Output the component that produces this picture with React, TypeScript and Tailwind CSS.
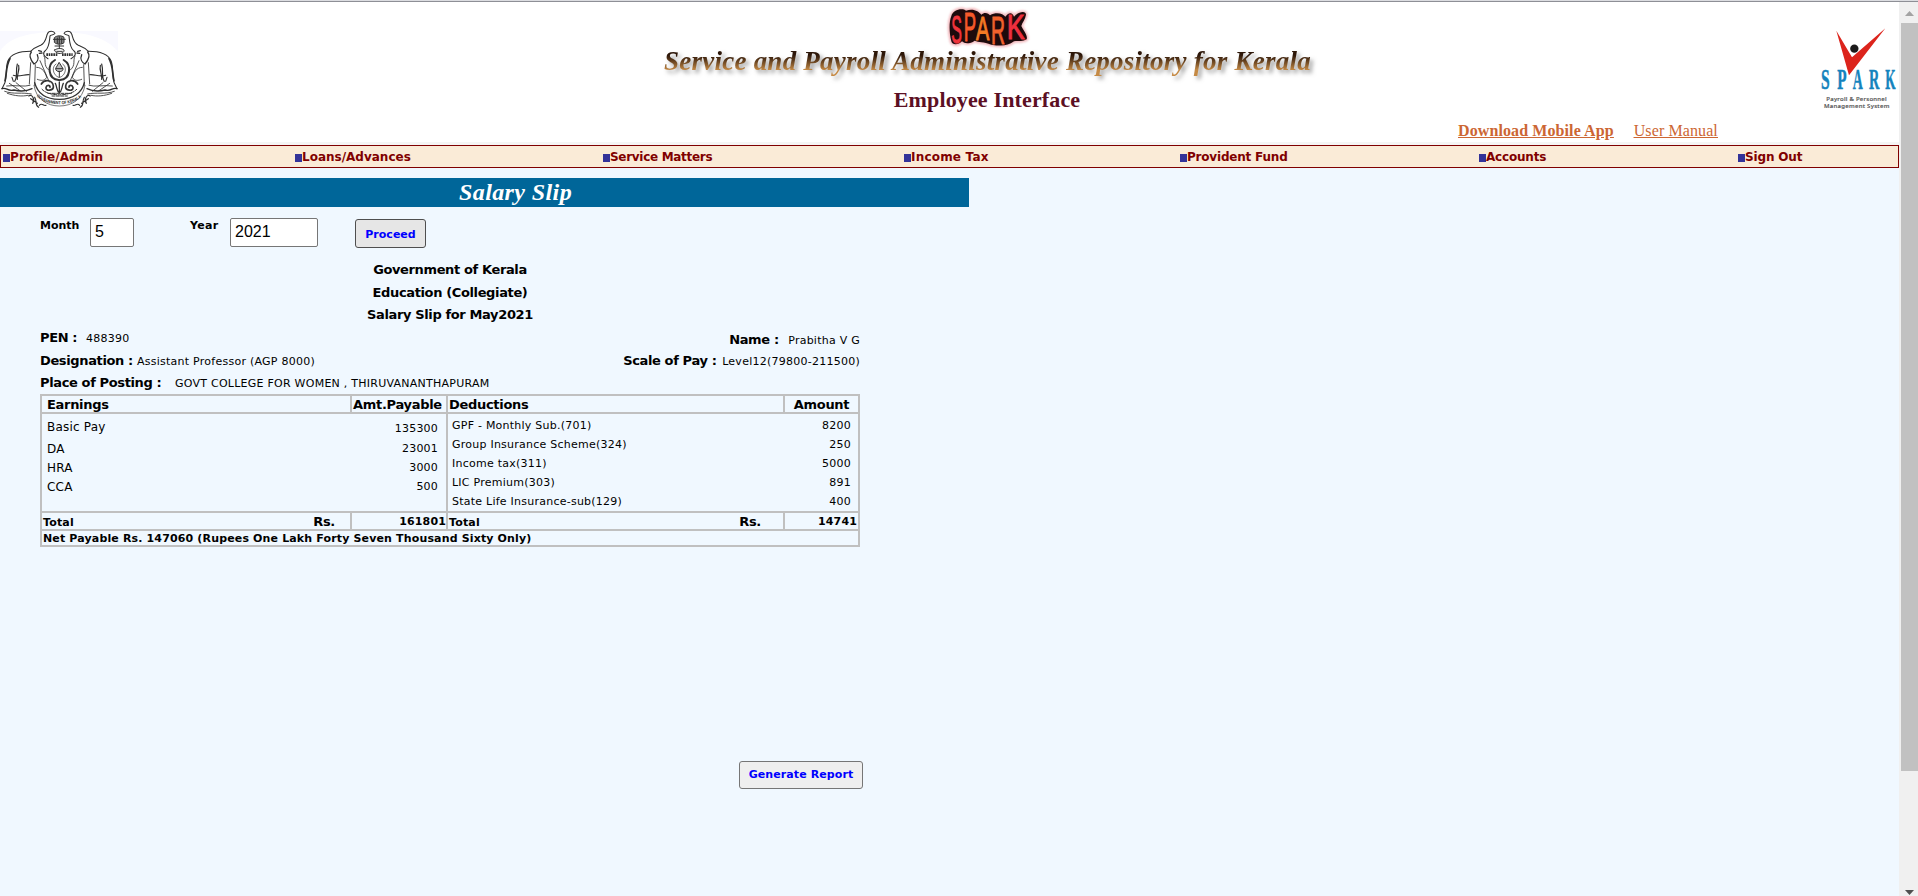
import React from "react";

const SANS = "font-['DejaVu_Sans',Verdana,sans-serif]";
const SERIF = "font-['Liberation_Serif','Times_New_Roman',serif]";

function Elephant() {
  return (
    <g fill="none" stroke="#2f2f2f" strokeWidth="3.2" strokeLinecap="round" strokeLinejoin="round">
      <path d="M92 70 C62 70 34 76 24 98 C15 122 22 146 14 166 L6 182" />
      <path d="M30 92 C18 112 20 140 15 158" strokeWidth="5" />
      <path d="M52 108 C46 130 54 146 44 160 M56 112 C60 126 50 140 52 154" strokeWidth="3.5" />
      <path d="M92 70 C104 58 112 56 122 52 C138 44 138 28 142 18 C146 6 162 8 165 16 C160 24 152 18 150 24 C148 42 148 58 136 68 C126 76 132 86 144 92" />
      <path d="M94 72 C84 84 92 96 102 108 C110 104 118 94 112 80" strokeWidth="4" />
      <path d="M116 68 L124 70 M118 76 L126 75" strokeWidth="4" />
      <path d="M132 84 C140 98 128 110 146 126" strokeWidth="2.5" />
      <path d="M92 104 L88 168 M106 110 L104 172 M110 118 C128 118 136 134 140 148 C134 160 122 158 112 154 M120 98 L148 162" strokeWidth="2.5" />
      <path d="M40 142 C58 148 74 138 88 140 M36 148 L40 160" />
      <path d="M6 182 C20 176 22 192 42 186 C58 190 76 192 96 182" strokeWidth="4" />
      <path d="M14 190 C40 200 68 192 94 198 M22 196 C44 204 66 206 84 202 M20 174 C46 170 72 178 90 172 M28 166 L60 188 M48 164 L80 190" strokeWidth="2.5" />
      <path d="M86 204 C96 196 106 214 98 226 M104 208 C112 220 104 232 116 238 M118 232 C126 222 130 236 138 232 M92 212 L112 226" strokeWidth="3.5" />
    </g>
  );
}

function Emblem() {
  return (
    <svg className="mt-[26px] block h-[84px] w-[120px] shrink-0" viewBox="0 0 360 252">
      <path d="M0 9 H354 V70 C320 30 260 12 178 12 C96 12 30 24 0 70 Z" fill="#f9f9ff" />
      <Elephant />
      <g transform="translate(357 0) scale(-1 1)">
        <Elephant />
      </g>
      <g fill="none" stroke="#333" strokeWidth="3" strokeLinecap="round">
        <path d="M164 28 C170 22 186 22 192 28 V44 C186 50 170 50 164 44 Z" fill="#8b8b8b" />
        <path d="M172 30 V46 M178 26 V48 M185 30 V46 M160 34 H196" />
        <path d="M165 54 H191 M178 51 V62 M164 66 C172 60 186 60 192 66 C194 80 164 80 164 66 Z M170 70 H187" />
        <path d="M139 80 H172 M186 80 H218" strokeWidth="8" strokeDasharray="5 2" strokeLinecap="butt" />
        <path d="M165 96 C140 110 144 154 176 156 M191 96 C216 110 212 154 180 156" strokeWidth="6" />
        <path d="M168 108 C154 116 158 142 176 148 M188 108 C202 116 198 142 180 148" strokeWidth="2" />
        <path d="M178 104 L189 122 C191 134 165 134 167 122 Z" fill="#bcbcbc" />
        <path d="M178 130 V148 M168 122 H188" />
        <path d="M124 168 C134 152 158 156 160 174 C162 188 136 192 138 178 C140 170 150 170 150 178" strokeWidth="5" />
        <path d="M233 168 C223 152 199 156 197 174 C195 188 221 192 219 178 C217 170 207 170 207 178" strokeWidth="5" />
        <path d="M178 162 V190 M166 166 C172 180 170 190 178 194 C186 190 184 180 190 166" strokeWidth="4" />
        <path d="M104 164 C112 194 136 214 178 214 C220 214 246 194 253 164" strokeWidth="4" />
        <path d="M126 184 C146 206 210 206 230 184 M144 196 L214 196 M156 204 H202" strokeWidth="3" strokeDasharray="9 4" />
        <path d="M102 172 C108 214 142 234 178 234 C216 234 248 214 255 172" strokeWidth="2" />
      </g>
      <path id="motto" d="M110 204 C136 237 220 237 246 204" fill="none" />
      <text className="font-['Liberation_Sans',Arial,sans-serif] font-bold" fontSize="13" fill="#222">
        <textPath href="#motto" textLength="146" lengthAdjust="spacingAndGlyphs">GOVERNMENT OF KERALA</textPath>
      </text>
    </svg>
  );
}

function FieryWordmark() {
  const letters = [
    { c: "S", x: 94, y: 128, s: 118, w: 32, f: "#f0343c" },
    { c: "P", x: 131, y: 124, s: 120, w: 37, f: "#f4592a" },
    { c: "A", x: 168, y: 120, s: 100, w: 40, f: "#f47a24" },
    { c: "R", x: 213, y: 132, s: 118, w: 42, f: "#f2612c" },
    { c: "K", x: 260, y: 118, s: 106, w: 54, f: "#ee2f3e" },
  ];
  const glow =
    "M94 48 C98 30 126 22 138 32 C160 24 176 34 184 44 C194 34 206 40 210 46 C230 34 250 42 256 50 C268 34 278 38 282 50 C296 34 318 32 318 44 C316 58 306 68 304 78 C310 92 324 106 320 118 C306 126 290 122 282 124 C262 140 240 138 214 134 C190 124 176 128 164 122 C150 132 134 132 126 124 C116 136 96 136 94 124 C88 100 86 68 94 48 Z";
  return (
    <svg className="ml-[4px] block h-[46px] w-[86px] overflow-visible" viewBox="78 6 258 138">
      <path d={glow} fill="#e98a92" stroke="#e98a92" strokeWidth="10" opacity="0.6" className="blur-[3px]" />
      <path d={glow} fill="#1d0a0c" />
      <g className="font-['Liberation_Sans_Narrow','Liberation_Sans',Arial,sans-serif]">
        {letters.map((l) => (
          <text key={l.c} x={l.x} y={l.y} fontSize={l.s} textLength={l.w} lengthAdjust="spacingAndGlyphs" fill={l.f} stroke={l.f} strokeWidth="3">{l.c}</text>
        ))}
      </g>
    </svg>
  );
}

function SparkLogo() {
  return (
    <svg className="mt-[18px] block h-[96px] w-[89px] shrink-0" viewBox="0 0 267 288">
      <g className="font-['Liberation_Serif',serif] font-bold" fill="#1583bd" stroke="#1583bd" strokeWidth="1.5" fontSize="90">
        <text x="33" y="207" textLength="26" lengthAdjust="spacingAndGlyphs">S</text>
        <text x="82" y="207" textLength="28" lengthAdjust="spacingAndGlyphs">P</text>
        <text x="128" y="207" textLength="30" lengthAdjust="spacingAndGlyphs">A</text>
        <text x="177" y="207" textLength="31" lengthAdjust="spacingAndGlyphs">R</text>
        <text x="226" y="207" textLength="31" lengthAdjust="spacingAndGlyphs">K</text>
      </g>
      <path d="M79 32 L126 112 L226 25 L117 166 Z" fill="#dc241c" />
      <circle cx="133" cy="86" r="12.5" fill="#1c1a1a" />
      <g className="font-['Noto_Sans',sans-serif] font-medium" fill="#555" stroke="#555" strokeWidth="0.5" fontSize="18">
        <text x="49" y="243" textLength="181">Payroll  &amp; Personnel</text>
        <text x="42" y="264" textLength="196">Management System</text>
      </g>
    </svg>
  );
}

const menu = [
  { label: "Profile/Admin", box: "w-[292px] tracking-[0.1px]" },
  { label: "Loans/Advances", box: "w-[308px]" },
  { label: "Service Matters", box: "w-[301px] tracking-[-0.3px]" },
  { label: "Income Tax", box: "w-[276px] tracking-[0.2px]" },
  { label: "Provident Fund", box: "w-[299px] tracking-[-0.2px]" },
  { label: "Accounts", box: "w-[259px] tracking-[-0.2px]" },
  { label: "Sign Out", box: "w-[150px] tracking-[-0.15px]" },
];

const earnings = [
  ["Basic Pay", "135300", "h-[22px]", "pt-[2px]"],
  ["DA", "23001", "h-[19px]", ""],
  ["HRA", "3000", "h-[19px]", ""],
  ["CCA", "500", "h-[19px]", ""],
];

const deductions = [
  ["GPF - Monthly Sub.(701)", "8200"],
  ["Group Insurance Scheme(324)", "250"],
  ["Income tax(311)", "5000"],
  ["LIC Premium(303)", "891"],
  ["State Life Insurance-sub(129)", "400"],
];

function Header() {
  return (
    <header className="h-[140px] bg-white">
      <div className="flex h-[118px]">
        <Emblem />
        <div className="ml-[537px] flex w-[660px] flex-col items-center">
          <div className="h-[42px]">
            <FieryWordmark />
          </div>
          <div className={`${SERIF} h-[34px] w-full whitespace-nowrap pl-[7px] text-[27px] font-bold italic leading-[34px] tracking-[0.24px] drop-shadow-[3px_3px_2px_rgba(60,60,60,0.5)]`}>
            <span className="bg-gradient-to-b from-[#2c1608] from-30% to-[#c58a45] to-80% bg-clip-text text-transparent">
              Service and Payroll Administrative Repository for Kerala
            </span>
          </div>
          <div className={`${SERIF} mt-[9px] text-[22px] font-bold leading-[26px] tracking-[0.15px] text-[#5c1024]`}>
            Employee Interface
          </div>
        </div>
        <div className="grow" />
        <SparkLogo />
      </div>
      <div className={`${SERIF} flex gap-[20px] whitespace-nowrap pl-[1458px] text-[16px] leading-[22px] tracking-[0.1px] text-[#cc6633] underline`}>
        <a className="font-bold">Download Mobile App</a>
        <a>User Manual</a>
      </div>
    </header>
  );
}

function Menu() {
  return (
    <nav className="flex h-[23px] border border-[#800000] bg-[#faebd7] pl-[2px]">
      {menu.map((m) => (
        <div key={m.label} className={`${m.box} flex shrink-0 whitespace-nowrap text-[12px] font-bold leading-[23px] text-[#800000]`}>
          <span className="mt-[8px] h-[8px] w-[7px] bg-[#333399]" />
          <span>{m.label}</span>
        </div>
      ))}
    </nav>
  );
}

const LABEL = "text-[13px] tracking-[-0.37px]";
const ROW = "flex items-baseline whitespace-nowrap text-[11px] leading-[24px] tracking-[0.25px]";

function Slip() {
  return (
    <section className="ml-[40px] w-[820px]">
      <div className="flex h-[49px] text-[11px] font-bold">
        <span className="mt-[12px] w-[50px] leading-[14px]">Month</span>
        <span className="mt-[11px] h-[29px] w-[44px] rounded-[2px] border border-[#767676] bg-white pl-[4px] font-['Liberation_Sans',Arial,sans-serif] text-[16px] font-normal leading-[26px]">5</span>
        <span className="ml-[56px] mt-[12px] w-[40px] leading-[14px] tracking-[0.3px]">Year</span>
        <span className="mt-[11px] h-[29px] w-[88px] rounded-[2px] border border-[#767676] bg-white pl-[4px] font-['Liberation_Sans',Arial,sans-serif] text-[16px] font-normal leading-[26px]">2021</span>
        <button className="ml-[37px] mt-[12px] h-[29px] w-[71px] rounded-[3px] border border-[#4f4f4f] bg-[#e6e6e6] pt-px leading-[27px] text-[#0000ff]">Proceed</button>
      </div>
      <div className="mt-[2px] text-center text-[13px] font-bold leading-[23px] tracking-[-0.37px]">
        <div className="h-[23px]">Government of Kerala</div>
        <div className="h-[22px]">Education (Collegiate)</div>
        <div className="h-[23px]">Salary Slip for May2021</div>
      </div>
      <div className="flex h-[23px] justify-between">
        <div className={ROW}>
          <b className={`${LABEL} w-[46px]`}>PEN :</b>
          <span>488390</span>
        </div>
        <div className={`${ROW} pt-[2px]`}>
          <b className={`${LABEL} w-[59px]`}>Name :</b>
          <span>Prabitha V G</span>
        </div>
      </div>
      <div className="flex h-[22px] justify-between">
        <div className={ROW}>
          <b className={`${LABEL} w-[97px]`}>Designation :</b>
          <span>Assistant Professor (AGP 8000)</span>
        </div>
        <div className={ROW}>
          <b className={`${LABEL} w-[99px]`}>Scale of Pay :</b>
          <span>Level12(79800-211500)</span>
        </div>
      </div>
      <div className="h-[23px]">
        <div className={ROW}>
          <b className={`${LABEL} w-[135px]`}>Place of Posting :</b>
          <span>GOVT COLLEGE FOR WOMEN , THIRUVANANTHAPURAM</span>
        </div>
      </div>
      <div className="grid h-[153px] grid-cols-[308px_94px_335px_73px] grid-rows-[16px_97px_16px_14px] gap-[2px] whitespace-nowrap border-2 border-[#c0c0c0] bg-[#c0c0c0] text-[11px] tracking-[0.15px] *:bg-[#f0f8ff]">
        <b className="pl-[5px] text-[13px] leading-[17px] tracking-[-0.3px]">Earnings</b>
        <b className="pl-[1px] text-[13px] leading-[17px] tracking-[-0.3px]">Amt.Payable</b>
        <b className="pl-[1px] text-[13px] leading-[17px] tracking-[-0.3px]">Deductions</b>
        <b className="text-center text-[13px] leading-[17px] tracking-[-0.3px]">Amount</b>
        <div className="col-span-2 pt-[3px] tracking-[0.2px]">
          {earnings.map(([name, amount, height, offset]) => (
            <div key={name} className={`${height} flex justify-between pl-[5px] pr-[8px] leading-[20px]`}>
              <span className="text-[12px]">{name}</span>
              <span className={offset}>{amount}</span>
            </div>
          ))}
        </div>
        <div className="col-span-2 pt-[2px] tracking-[0.24px]">
          {deductions.map(([name, amount]) => (
            <div key={name} className="flex h-[19px] justify-between pl-[4px] pr-[7px] leading-[19px]">
              <span>{name}</span>
              <span>{amount}</span>
            </div>
          ))}
        </div>
        <div className="flex items-baseline justify-between pl-[1px] pr-[15px] font-bold leading-[18px]">
          <span>Total</span>
          <span className="text-[13px] tracking-[-0.3px]">Rs.</span>
        </div>
        <b className="text-right leading-[18px]">161801</b>
        <div className="flex items-baseline justify-between pl-[1px] pr-[22px] font-bold leading-[18px]">
          <span>Total</span>
          <span className="text-[13px] tracking-[-0.3px]">Rs.</span>
        </div>
        <b className="pr-[1px] text-right leading-[18px]">14741</b>
        <b className="col-span-4 pl-[1px] leading-[16px]">Net Payable Rs. 147060 (Rupees One Lakh Forty Seven Thousand Sixty Only)</b>
      </div>
      <button className="ml-[699px] mt-[214px] block h-[28px] w-[124px] whitespace-nowrap rounded-[3px] border border-[#767676] bg-[#efefef] text-[11px] font-bold leading-[26px] tracking-[0.1px] text-[#0000ff]">
        Generate Report
      </button>
    </section>
  );
}

function Scrollbar() {
  return (
    <aside className="flex w-[19px] shrink-0 flex-col items-end bg-[#f0f0f0]">
      <svg className="h-[21px] w-[17px]" viewBox="0 0 17 21">
        <path d="M4 14 L8.500 9 L13 14 Z" fill="#a3a3a3" />
      </svg>
      <div className="h-[748px] w-[17px] bg-[#c1c1c1]" />
      <div className="grow" />
      <svg className="h-[17px] w-[17px]" viewBox="0 0 17 17">
        <path d="M4 11 L13 11 L8.500 16 Z" fill="#505050" />
      </svg>
    </aside>
  );
}

export default function App() {
  return (
    <div className={`${SANS} flex h-[896px] w-[1918px] flex-col overflow-hidden bg-[#f0f8ff] text-black`}>
      <div className="h-[2px] shrink-0 border-b border-[#8e8f96] bg-[#dcdde1]" />
      <div className="flex grow">
        <main className="w-[1899px]">
          <div className="bg-[#f5f5f5]">
            <Header />
            <div className="pt-[3px]">
              <Menu />
            </div>
          </div>
          <h1 className={`${SERIF} mt-[10px] h-[29px] w-[969px] bg-[#006699] pl-[459px] text-[24px] font-bold italic leading-[28px] tracking-[0.4px] text-white`}>
            Salary Slip
          </h1>
          <Slip />
        </main>
        <Scrollbar />
      </div>
    </div>
  );
}
